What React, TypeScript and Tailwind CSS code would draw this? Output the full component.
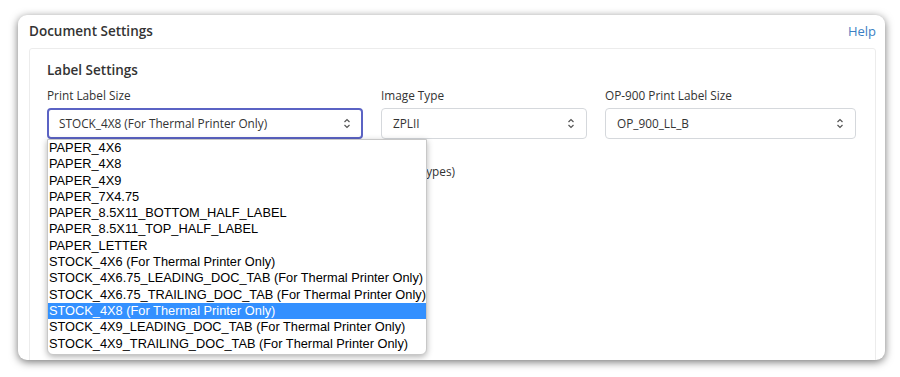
const options = [
  "PAPER_4X6",
  "PAPER_4X8",
  "PAPER_4X9",
  "PAPER_7X4.75",
  "PAPER_8.5X11_BOTTOM_HALF_LABEL",
  "PAPER_8.5X11_TOP_HALF_LABEL",
  "PAPER_LETTER",
  "STOCK_4X6 (For Thermal Printer Only)",
  "STOCK_4X6.75_LEADING_DOC_TAB (For Thermal Printer Only)",
  "STOCK_4X6.75_TRAILING_DOC_TAB (For Thermal Printer Only)",
  "STOCK_4X8 (For Thermal Printer Only)",
  "STOCK_4X9_LEADING_DOC_TAB (For Thermal Printer Only)",
  "STOCK_4X9_TRAILING_DOC_TAB (For Thermal Printer Only)",
];

function Chevron() {
  return (
    <svg width="8" height="11" viewBox="0 0 8 11" className="shrink-0">
      <path d="M1.5 4 L4 1.5 L6.5 4" fill="none" stroke="#555" strokeWidth="1.2" />
      <path d="M1.5 7 L4 9.5 L6.5 7" fill="none" stroke="#555" strokeWidth="1.2" />
    </svg>
  );
}

function Select({ value, focused }: { value: string; focused?: boolean }) {
  return (
    <div
      className={
        focused
          ? "flex h-[31px] items-center justify-between rounded-[4px] border-2 border-[#5b63c4] pl-[10px] pr-[10px]"
          : "flex h-[31px] items-center justify-between rounded-[4px] border border-[#d5d8dc] pl-[11px] pr-[11px]"
      }
    >
      <span className="text-[11.8px] text-[#333]">{value}</span>
      <Chevron />
    </div>
  );
}

export default function App() {
  return (
    <div
      className="h-[377px] w-[900px] overflow-hidden bg-white pl-[18px] pt-[15px]"
      style={{ fontFamily: '"Open Sans", "Noto Sans", sans-serif' }}
    >
      <div className="h-[345px] w-[867px] overflow-hidden rounded-[9px] bg-white pl-[11px] pr-[9px] shadow-[0_2px_9px_rgba(0,0,0,0.55)]">
        <div className="flex h-[33px] items-center justify-between">
          <h1 className="text-[13.5px] font-semibold text-[#333]">Document Settings</h1>
          <a className="text-[13px] text-[#3b7fc4]">Help</a>
        </div>

        <div className="h-[340px] rounded-[3px] border border-[#ececec] pl-[17px] pr-[19px] pt-[11px]">
          <h2 className="text-[13.5px] font-semibold leading-[20px] text-[#333]">Label Settings</h2>

          <div className="mt-[6px] flex gap-[18px]">
            <div className="relative w-[316px]">
              <div className="mb-[4px] text-[11.8px] leading-[18px] text-[#333]">Print Label Size</div>
              <Select value="STOCK_4X8 (For Thermal Printer Only)" focused />

              <div className="absolute right-[-92px] top-[76px] whitespace-nowrap text-[11.8px] leading-[18px] text-[#333]">
                (Applies to all document types)
              </div>

              <div className="absolute left-0 top-[53px] z-10 w-[380px] overflow-hidden rounded-b-[6px] border border-[#c8c8c8] bg-white pb-[2px] shadow-[0_2px_6px_rgba(0,0,0,0.3)]">
                {options.map((o) =>
                  o === "STOCK_4X8 (For Thermal Printer Only)" ? (
                    <div
                      key={o}
                      className="h-[16.3px] whitespace-nowrap bg-[#3390ff] pl-[1px] text-[12.8px] leading-[16px] text-white"
                      style={{ fontFamily: '"Liberation Sans", Arial, sans-serif' }}
                    >
                      {o}
                    </div>
                  ) : (
                    <div
                      key={o}
                      className="h-[16.3px] whitespace-nowrap pl-[1px] text-[12.8px] leading-[16px] text-black"
                      style={{ fontFamily: '"Liberation Sans", Arial, sans-serif' }}
                    >
                      {o}
                    </div>
                  )
                )}
              </div>
            </div>

            <div className="w-[206px]">
              <div className="mb-[4px] text-[11.8px] leading-[18px] text-[#333]">Image Type</div>
              <Select value="ZPLII" />
            </div>

            <div className="w-[251px]">
              <div className="mb-[4px] text-[11.8px] leading-[18px] text-[#333]">OP-900 Print Label Size</div>
              <Select value="OP_900_LL_B" />
            </div>
          </div>
        </div>
      </div>
    </div>
  );
}
